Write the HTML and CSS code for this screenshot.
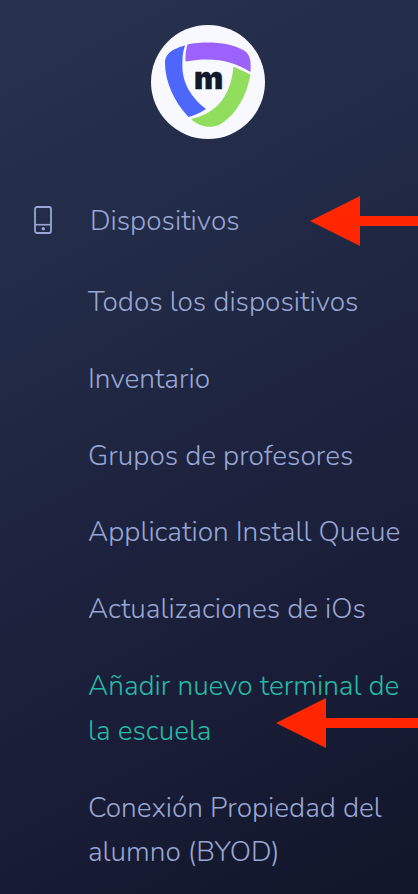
FILE: index.html
```html
<!DOCTYPE html>
<html lang="es">
<head>
<meta charset="utf-8">
<title>Dispositivos</title>
<link rel="stylesheet" href="styles.css">
</head>
<body>
<nav class="sidebar">
  <div class="logo">
    <svg class="logo-ring" viewBox="0 0 114 114" aria-hidden="true">
      <path fill="#4d66fc" d="M34 20.5 C25 23 14 27 14 38 C14 56 23 77 37.500 92 C43 90.500 49 88 55 84 C37 70 30 54 31.500 35 C31.500 30 32.500 25 34 20.500Z"/>
      <path fill="#9b63fb" d="M36.500 19.500 C55 16 78 17 93 25.500 C100 30 100 37 99.500 47 C82 36 62 31.500 34.500 36.500 C34 30 35 25 36.500 19.500Z"/>
      <path fill="#91de5f" d="M82.500 41.500 L99.500 49.500 C96 69 86 90 68 100 C58 104 47 101 40 94 C50 92 60 87 67 80 C77 70 81 56 82.500 41.500Z"/>
    </svg>
    <span class="logo-letter">m</span>
  </div>
  <a class="section">
    <svg class="device" viewBox="0 0 18 28" aria-hidden="true">
      <rect x="1" y="1" width="16" height="26" rx="2" fill="none" stroke="currentColor" stroke-width="1.800"/>
      <path d="M1 18.700H17" stroke="currentColor" stroke-width="1.600"/>
      <circle cx="9.300" cy="22.700" r="1.700" fill="currentColor"/>
    </svg>
    <span>Dispositivos</span>
  </a>
  <ul class="menu">
    <li>Todos los dispositivos</li>
    <li>Inventario</li>
    <li>Grupos de profesores</li>
    <li>Application Install Queue</li>
    <li>Actualizaciones de iOs</li>
    <li class="active">Añadir nuevo terminal de<br>la escuela</li>
    <li>Conexión Propiedad del<br>alumno (BYOD)</li>
  </ul>
  <svg class="arrow arrow-top" viewBox="0 0 142 50" aria-hidden="true"><path fill="#ff2600" d="M0 25 50 0V20H142V30H50V50Z"/></svg>
  <svg class="arrow arrow-active" viewBox="0 0 142 50" aria-hidden="true"><path fill="#ff2600" d="M0 25 50 0V20H142V30H50V50Z"/></svg>
</nav>
</body>
</html>
```
FILE: styles.css
```css
body { margin: 0; }
.sidebar {
  position: relative;
  box-sizing: border-box;
  width: 418px;
  height: 894px;
  padding-top: 25px;
  overflow: hidden;
  background: linear-gradient(152deg, #28324f 0%, #222b47 28%, #1a1e39 68%, #12162a 100%);
  color: #98a6d3;
  font: 300 28px/44.700px "Nunito", "Open Sans", sans-serif;
  white-space: nowrap;
}
.logo {
  display: grid;
  place-items: center;
  width: 114px;
  height: 114px;
  margin-left: 151px;
  border-radius: 50%;
  background: #f8f9ff;
}
.logo-ring, .logo-letter { grid-area: 1 / 1; }
.logo-ring { width: 114px; height: 114px; }
.logo-letter {
  color: #14182b;
  font: 900 31px/40px Inter, sans-serif;
  -webkit-text-stroke: 0.400px #14182b;
  margin: -9px 0 0 1px;
}
.section {
  display: flex;
  align-items: center;
  height: 44px;
  margin-top: 60px;
  padding-left: 34px;
}
.device { width: 18px; height: 28px; margin: -2px 38px 0 0; }
.menu {
  display: flex;
  flex-direction: column;
  gap: 32.100px;
  margin: 37px 0 0;
  padding: 0 0 0 88px;
  list-style: none;
}
.active { color: #25baa6; }
.menu li:last-child { margin-top: 0.300px; }
.arrow { position: absolute; width: 142px; height: 50px; }
.arrow-top { left: 310px; top: 196px; }
.arrow-active { left: 276px; top: 698px; }
```
